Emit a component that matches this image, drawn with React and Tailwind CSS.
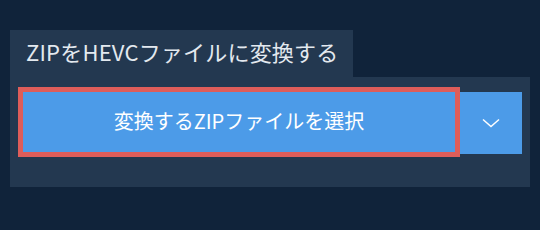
export default function App() {
  return (
    <div
      className="w-[540px] h-[230px] bg-[#10233a] pt-[30px] pl-[10px]"
      style={{ fontFamily: '"Noto Sans CJK JP", "Noto Sans", sans-serif' }}
    >
      <div className="w-[343px] h-[47px] bg-[#233850] flex items-center pl-4 pb-[5px] text-[22px] tracking-[0.2px] text-[#e3e9ef]">
        ZIPをHEVCファイルに変換する
      </div>
      <div className="w-[520px] h-[110px] bg-[#233850] flex items-start pl-2 pt-[10px]">
        <button className="w-[442px] h-[70px] border-[5px] border-[#de5d5a] bg-[#4c9be8] text-white text-[20px] flex items-center justify-center pb-[2px]">
          変換するZIPファイルを選択
        </button>
        <button className="mt-[5px] w-[62px] h-[62px] bg-[#4c9be8] flex items-center justify-center">
          <svg width="18" height="10" viewBox="0 0 18 10" fill="none">
            <path d="M1 1.5L9 8.5L17 1.5" stroke="white" strokeWidth="1.5" />
          </svg>
        </button>
      </div>
    </div>
  );
}
